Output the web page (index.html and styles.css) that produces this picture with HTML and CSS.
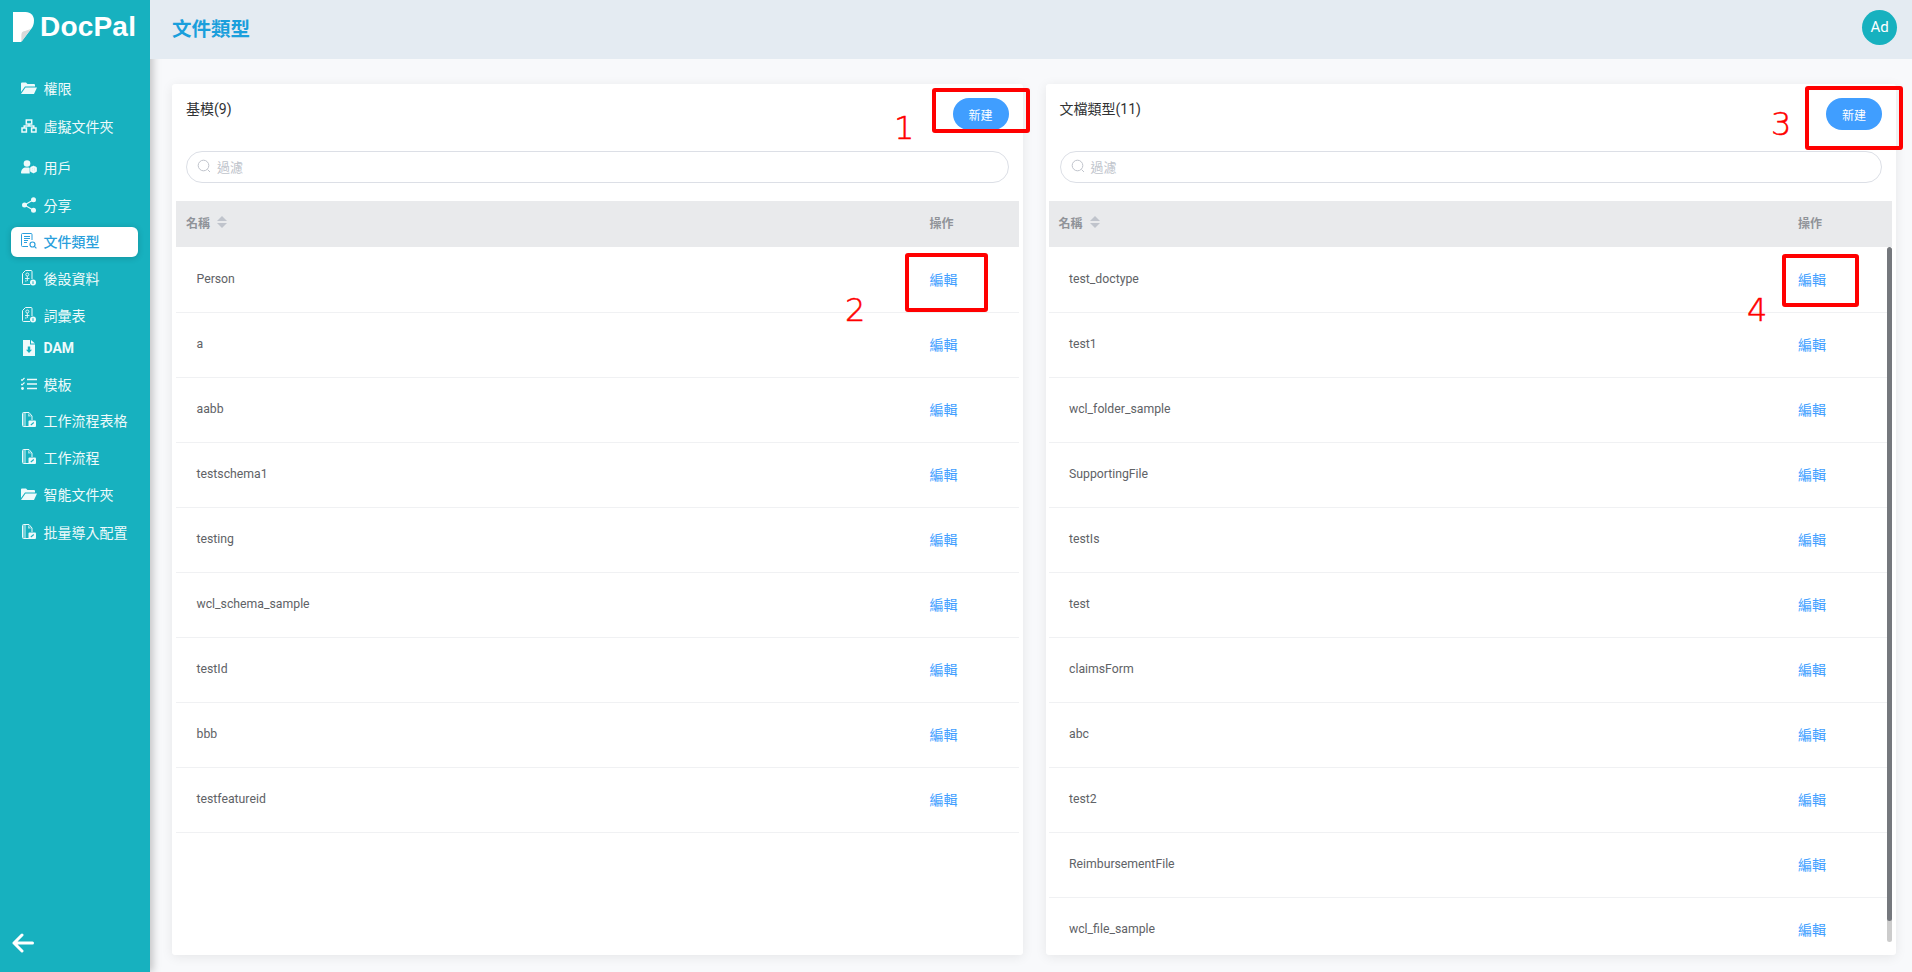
FILE: index.html
```html
<!DOCTYPE html>
<html lang="zh-Hant">
<head>
  <meta charset="UTF-8" />
  <meta name="viewport" content="width=device-width, initial-scale=1.0"/>
  <title>文件類型</title>
  <link rel="stylesheet" href="styles.css">
</head>
<body>
  <svg class="icon-defs" xmlns="http://www.w3.org/2000/svg">
    <symbol id="i-folder" viewBox="0 0 16 13">
      <path fill="currentColor" d="M0 2a1 1 0 0 1 1-1h4l1.500 1.500H13a1 1 0 0 1 1 1V5H4L0 10.500z"/>
      <path fill="currentColor" d="M4.500 6H16l-3 6.500H0z"/>
    </symbol>
    <symbol id="i-tree" viewBox="0 0 16 14">
      <g fill="none" stroke="currentColor" stroke-width="1.500">
        <rect x="5.300" y="1" width="5.400" height="4"/>
        <rect x="1" y="9" width="4.400" height="4"/>
        <rect x="10.600" y="9" width="4.400" height="4"/>
        <path d="M8 5v2H3.200v2M8 7h4.800v2"/>
      </g>
    </symbol>
    <symbol id="i-user" viewBox="0 0 16 14">
      <circle cx="6" cy="3.500" r="3.300" fill="currentColor"/>
      <path fill="currentColor" d="M0 13c0-3.500 2.200-5.500 5-5.500h2.500c.8 0 1.200.3 1.200.8V13.500H.5z"/>
      <circle cx="12.500" cy="9.500" r="2.400" fill="none" stroke="currentColor" stroke-width="2"/>
      <path stroke="currentColor" stroke-width="1.200" d="M12.500 5.800v7.400M9.300 7.700l6.400 3.600M9.300 11.300l6.400-3.600"/>
    </symbol>
    <symbol id="i-share" viewBox="0 0 14 16">
      <circle cx="11.500" cy="2.800" r="2.500" fill="currentColor"/>
      <circle cx="2.500" cy="8" r="2.500" fill="currentColor"/>
      <circle cx="11.500" cy="13.200" r="2.500" fill="currentColor"/>
      <path fill="none" stroke="currentColor" stroke-width="1.100" d="M11.500 2.800 2.500 8l9 5.200"/>
    </symbol>
    <symbol id="i-docsearch" viewBox="0 0 16 16">
      <path fill="none" stroke="currentColor" stroke-width="1" d="M7 13.500H1.500a1 1 0 0 1-1-1V1.500a1 1 0 0 1 1-1H10a1 1 0 0 1 1 1V7"/>
      <path stroke="currentColor" stroke-width="1" d="M3 3.500h6M3 5.500h6M3 7.500h4M3 9.500h3"/>
      <circle cx="11.500" cy="11.500" r="2.500" fill="none" stroke="currentColor" stroke-width="1.200"/>
      <path stroke="currentColor" stroke-width="1.200" d="m13.400 13.400 2 2"/>
    </symbol>
    <symbol id="i-meta" viewBox="0 0 14 16">
      <path fill="none" stroke="currentColor" stroke-width="1" d="M8 14.500H1.500a1 1 0 0 1-1-1V3.500L3.500.5H9a1 1 0 0 1 1 1V9"/>
      <circle cx="5.300" cy="4.500" r="1.500" fill="none" stroke="currentColor" stroke-width=".9"/>
      <path fill="none" stroke="currentColor" stroke-width=".9" d="M5.300 6v5M3 8.500h4.500M3 11h1.500"/>
      <circle cx="11" cy="12.500" r="3" fill="currentColor"/>
      <path stroke="#17b1bf" stroke-width="1" d="M11 11.200v2.800"/>
    </symbol>
    <symbol id="i-dam" viewBox="0 0 12 16">
      <path fill="currentColor" d="M0 0h7v4.500h5V16H0zM8 0l4 3.500H8z"/>
      <path fill="#17b1bf" d="M4.800 6.500h2.400v3.200H9L6 13 3 9.700h1.800z"/>
    </symbol>
    <symbol id="i-list" viewBox="0 0 16 13">
      <path stroke="currentColor" stroke-width="1.700" d="M6 2h10M6 6.500h10M6 11h10"/>
      <path fill="none" stroke="currentColor" stroke-width="1.100" d="m0 2 1 1 2.500-2.500M0 6.500l1 1 2.500-2.500"/>
      <circle cx="1.500" cy="11" r="1.400" fill="currentColor"/>
    </symbol>
    <symbol id="i-flow" viewBox="0 0 14 16">
      <path fill="none" stroke="currentColor" stroke-width="1" d="M7 14.500H1.500a1 1 0 0 1-1-1V1.500a1 1 0 0 1 1-1H7L10 4v4"/>
      <path fill="currentColor" opacity=".45" d="M1 1h3v13H1z"/>
      <path fill="currentColor" opacity=".6" d="M6 1l3.500 3.500H6z"/>
      <rect x="6.500" y="8.500" width="7.500" height="6.500" rx="1" fill="currentColor"/>
      <path stroke="#17b1bf" stroke-width="1.100" d="m8.800 13 3-2.500"/>
    </symbol>
    <symbol id="i-back" viewBox="0 0 22 20">
      <path fill="none" stroke="currentColor" stroke-width="3" stroke-linecap="round" stroke-linejoin="round" d="M20.500 10H2M10 2 2 10l8 8"/>
    </symbol>
    <symbol id="i-search" viewBox="0 0 14 14">
      <circle cx="6.500" cy="6.500" r="5.300" fill="none" stroke="currentColor" stroke-width="1"/>
      <path stroke="currentColor" stroke-width="1" d="m10.500 10.500 2.500 2.500"/>
    </symbol>
  </svg>

  <div class="layout">
    <aside class="sidebar">
      <div class="logo">
        <svg class="logo-mark" viewBox="0 0 21 30" xmlns="http://www.w3.org/2000/svg">
          <path fill="#fff" d="M0 0h12.500C18 0 21 4 21 8.500c0 3.500-1 6-2.500 8L8 30H0z"/>
          <path fill="#d9d9d9" d="M8.500 30c0-4-.5-8 .5-9.500 1.500-2 7-1.500 10-5z"/>
        </svg>
        <span class="logo-text">DocPal</span>
      </div>
      <nav class="nav">
        <a class="nav-item"><svg class="nav-icon"><use href="#i-folder"/></svg>權限</a>
        <a class="nav-item gap-l"><svg class="nav-icon"><use href="#i-tree"/></svg>虛擬文件夾</a>
        <a class="nav-item gap-xl"><svg class="nav-icon"><use href="#i-user"/></svg>用戶</a>
        <a class="nav-item gap-l"><svg class="nav-icon"><use href="#i-share"/></svg>分享</a>
        <a class="nav-item gap-m active"><svg class="nav-icon"><use href="#i-docsearch"/></svg>文件類型</a>
        <a class="nav-item"><svg class="nav-icon"><use href="#i-meta"/></svg>後設資料</a>
        <a class="nav-item"><svg class="nav-icon"><use href="#i-meta"/></svg>詞彙表</a>
        <a class="nav-item gap-s strong"><svg class="nav-icon"><use href="#i-dam"/></svg>DAM</a>
        <a class="nav-item gap-m"><svg class="nav-icon"><use href="#i-list"/></svg>模板</a>
        <a class="nav-item gap-m"><svg class="nav-icon"><use href="#i-flow"/></svg>工作流程表格</a>
        <a class="nav-item"><svg class="nav-icon"><use href="#i-flow"/></svg>工作流程</a>
        <a class="nav-item"><svg class="nav-icon"><use href="#i-folder"/></svg>智能文件夾</a>
        <a class="nav-item gap-l"><svg class="nav-icon"><use href="#i-flow"/></svg>批量導入配置</a>
      </nav>
      <div class="collapse"><svg class="collapse-icon"><use href="#i-back"/></svg></div>
    </aside>

    <div class="content">
      <header class="topbar">
        <h1 class="page-title">文件類型</h1>
        <div class="avatar">Ad</div>
      </header>

      <main class="panels">
        <section class="card">
          <div class="card-head">
            <div class="card-title">基模(9)</div>
            <button class="btn-new" type="button">新建</button>
          </div>
          <div class="filter">
            <svg class="filter-icon"><use href="#i-search"/></svg>
            <span class="filter-text">過濾</span>
          </div>
          <div class="table">
            <div class="table-head">
              <div class="th-name">名稱
                <span class="sort"><i class="sort-up"></i><i class="sort-down"></i></span>
              </div>
              <div class="col-action">操作</div>
            </div>
            <div class="table-body">
              <div class="row"><div class="cell-name">Person</div><div class="col-action"><a class="edit">編輯</a></div></div>
              <div class="row"><div class="cell-name">a</div><div class="col-action"><a class="edit">編輯</a></div></div>
              <div class="row"><div class="cell-name">aabb</div><div class="col-action"><a class="edit">編輯</a></div></div>
              <div class="row"><div class="cell-name">testschema1</div><div class="col-action"><a class="edit">編輯</a></div></div>
              <div class="row"><div class="cell-name">testing</div><div class="col-action"><a class="edit">編輯</a></div></div>
              <div class="row"><div class="cell-name">wcl_schema_sample</div><div class="col-action"><a class="edit">編輯</a></div></div>
              <div class="row"><div class="cell-name">testId</div><div class="col-action"><a class="edit">編輯</a></div></div>
              <div class="row"><div class="cell-name">bbb</div><div class="col-action"><a class="edit">編輯</a></div></div>
              <div class="row"><div class="cell-name">testfeatureid</div><div class="col-action"><a class="edit">編輯</a></div></div>
            </div>
          </div>
        </section>

        <section class="card">
          <div class="card-head">
            <div class="card-title">文檔類型(11)</div>
            <button class="btn-new" type="button">新建</button>
          </div>
          <div class="filter">
            <svg class="filter-icon"><use href="#i-search"/></svg>
            <span class="filter-text">過濾</span>
          </div>
          <div class="table table-scroll">
            <div class="table-head">
              <div class="th-name">名稱
                <span class="sort"><i class="sort-up"></i><i class="sort-down"></i></span>
              </div>
              <div class="col-action">操作</div>
            </div>
            <div class="table-body">
              <div class="row"><div class="cell-name">test_doctype</div><div class="col-action"><a class="edit">編輯</a></div></div>
              <div class="row"><div class="cell-name">test1</div><div class="col-action"><a class="edit">編輯</a></div></div>
              <div class="row"><div class="cell-name">wcl_folder_sample</div><div class="col-action"><a class="edit">編輯</a></div></div>
              <div class="row"><div class="cell-name">SupportingFile</div><div class="col-action"><a class="edit">編輯</a></div></div>
              <div class="row"><div class="cell-name">testIs</div><div class="col-action"><a class="edit">編輯</a></div></div>
              <div class="row"><div class="cell-name">test</div><div class="col-action"><a class="edit">編輯</a></div></div>
              <div class="row"><div class="cell-name">claimsForm</div><div class="col-action"><a class="edit">編輯</a></div></div>
              <div class="row"><div class="cell-name">abc</div><div class="col-action"><a class="edit">編輯</a></div></div>
              <div class="row"><div class="cell-name">test2</div><div class="col-action"><a class="edit">編輯</a></div></div>
              <div class="row"><div class="cell-name">ReimbursementFile</div><div class="col-action"><a class="edit">編輯</a></div></div>
              <div class="row"><div class="cell-name">wcl_file_sample</div><div class="col-action"><a class="edit">編輯</a></div></div>
            </div>
            <div class="scroll-track"><div class="scroll-thumb"></div></div>
          </div>
        </section>
      </main>
    </div>
  </div>

  <!-- red markup drawn over the screenshot -->
  <div class="mark box-1"></div>
  <div class="mark box-2"></div>
  <div class="mark box-3"></div>
  <div class="mark box-4"></div>
  <div class="mark-num num-1">1</div>
  <div class="mark-num num-2">2</div>
  <div class="mark-num num-3">3</div>
  <div class="mark-num num-4">4</div>
</body>
</html>
```

FILE: styles.css
```css
/* Base */
html, body {
  height: 100%;
}

body {
  margin: 0;
  overflow: hidden;
  font-family: Roboto, "Noto Sans CJK TC", sans-serif;
  font-size: 12px;
  color: #606266;
  background-color: #f8f9fb;
}

.icon-defs {
  display: none;
}

.layout {
  display: flex;
  height: 100%;
}

/* Sidebar */
.sidebar {
  width: 150px;
  flex-shrink: 0;
  display: flex;
  flex-direction: column;
  background-color: #17b1bf;
  color: #fff;
  box-shadow: 3px 0 8px rgba(0, 0, 0, 0.22);
}

.logo {
  height: 59px;
  box-sizing: border-box;
  padding: 12px 0 0 13px;
  display: flex;
  gap: 6px;
}

.logo-mark {
  width: 21px;
  height: 30px;
}

.logo-text {
  font-family: "Liberation Sans", sans-serif;
  font-weight: 700;
  font-size: 28px;
  line-height: 29px;
  letter-spacing: 0.2px;
  color: #fff;
}

.nav {
  display: flex;
  flex-direction: column;
  padding: 15px 12px 0 11px;
}

.nav-item {
  height: 30px;
  box-sizing: border-box;
  margin-top: 7px;
  padding: 0 0 2px 10px;
  display: flex;
  align-items: center;
  gap: 6.5px;
  font-size: 14px;
  color: #eefafb;
  border-radius: 6px;
}

.nav-item:first-child {
  margin-top: 0;
}

.gap-s {
  margin-top: 3px;
}

.gap-m {
  margin-top: 6px;
}

.gap-l {
  margin-top: 8px;
}

.gap-xl {
  margin-top: 11px;
}

.nav-item.strong {
  font-weight: 700;
}

.nav-item.active {
  background-color: #fff;
  color: #2a9fdc;
  font-weight: 500;
  box-shadow: 0 1px 6px rgba(0, 0, 0, 0.18);
}

.nav-icon {
  width: 16px;
  height: 16px;
  flex-shrink: 0;
}

.collapse {
  margin-top: auto;
  padding: 0 0 19px 12px;
}

.collapse-icon {
  display: block;
  width: 22px;
  height: 20px;
}

/* Top bar */
.content {
  flex: 1;
  min-width: 0;
  min-height: 0;
  display: flex;
  flex-direction: column;
}

.topbar {
  position: relative;
  height: 59px;
  flex-shrink: 0;
  box-sizing: border-box;
  padding: 0 15px 5px 22px;
  display: flex;
  align-items: center;
  justify-content: space-between;
  background-color: #e4ebf2;
}

.page-title {
  margin: 0;
  font-size: 19.5px;
  font-weight: 700;
  color: #1a9fdc;
}

.avatar {
  width: 35px;
  height: 35px;
  border-radius: 50%;
  background-color: #17b1bf;
  color: #fff;
  font-size: 15px;
  display: flex;
  align-items: center;
  justify-content: center;
}

/* Cards */
.panels {
  flex: 1;
  min-height: 0;
  display: grid;
  grid-template-columns: 1fr 1fr;
  grid-template-rows: minmax(0, 1fr);
  gap: 23px;
  padding: 25px 16px 17px 22px;
}

.card {
  min-width: 0;
  min-height: 0;
  display: flex;
  flex-direction: column;
  background-color: #fff;
  border-radius: 3px;
  box-shadow: 0 2px 12px rgba(0, 0, 0, 0.08);
}

.card-head {
  display: flex;
  justify-content: space-between;
  padding: 14px 14px 0;
}

.card-title {
  padding-top: 1px;
  font-size: 14px;
  line-height: 20px;
  color: #303133;
}

.btn-new {
  width: 56px;
  height: 32px;
  padding: 0;
  border: none;
  border-radius: 16px;
  background-color: #409eff;
  color: #fff;
  font-family: inherit;
  font-size: 12px;
}

/* Filter input */
.filter {
  height: 32px;
  box-sizing: border-box;
  margin: 21px 14px 18px;
  padding: 0 0 2px 10px;
  display: flex;
  align-items: center;
  gap: 6px;
  border: 1px solid #dcdfe6;
  border-radius: 16px;
  color: #c0c4cc;
  font-size: 13px;
}

.filter-icon {
  width: 14px;
  height: 14px;
}

/* Table */
.table {
  position: relative;
  flex: 1;
  min-height: 0;
  margin: 0 4px 8px;
  display: flex;
  flex-direction: column;
}

.table-scroll {
  margin-left: 3px;
}

.table-head {
  height: 46px;
  box-sizing: border-box;
  padding-bottom: 4px;
  flex-shrink: 0;
  display: flex;
  align-items: center;
  background-color: #e9eaec;
  color: #909399;
  font-weight: 700;
}

.th-name {
  flex: 1;
  padding-left: 10px;
  display: flex;
  align-items: center;
  gap: 7px;
}

.sort {
  display: inline-flex;
  flex-direction: column;
  gap: 2px;
}

.sort-up, .sort-down {
  width: 0;
  height: 0;
  border-left: 5px solid transparent;
  border-right: 5px solid transparent;
}

.sort-up {
  border-bottom: 5px solid #c0c4cc;
}

.sort-down {
  border-top: 5px solid #c0c4cc;
}

.col-action {
  width: 99px;
  box-sizing: border-box;
  padding-left: 10px;
}

.table-scroll .col-action {
  width: 104px;
}

.table-body {
  flex: 1;
  min-height: 0;
  padding-top: 1px;
  overflow: hidden;
}

.row {
  height: 65px;
  box-sizing: border-box;
  display: flex;
  align-items: center;
  border-bottom: 1px solid #f0f1f3;
}

.cell-name {
  flex: 1;
  padding: 0 0 3px 20.5px;
  font-size: 12.25px;
}

.row .col-action {
  padding-bottom: 2px;
}

.edit {
  font-size: 14px;
  color: #409eff;
}

/* Scrollbar of the right table */
.scroll-track {
  position: absolute;
  top: 46px;
  right: 0;
  width: 5px;
  height: 695px;
  border-radius: 3px;
  background-color: #ccc;
  overflow: hidden;
}

.scroll-thumb {
  height: 674px;
  border-radius: 3px;
  background-color: #75787d;
}

/* Red markup */
.mark {
  position: absolute;
  box-sizing: border-box;
  border: 4px solid #f00;
  border-radius: 3px;
}

.box-1 {
  left: 932px;
  top: 88px;
  width: 98px;
  height: 45px;
}

.box-2 {
  left: 905px;
  top: 253px;
  width: 83px;
  height: 59px;
}

.box-3 {
  left: 1805px;
  top: 86px;
  width: 98px;
  height: 64px;
}

.box-4 {
  left: 1782px;
  top: 254px;
  width: 77px;
  height: 53px;
}

.mark-num {
  position: absolute;
  font-family: "DejaVu Sans", sans-serif;
  font-size: 32px;
  line-height: 36px;
  font-weight: 200;
  -webkit-text-stroke: 0.5px #f00;
  color: #f00;
}

.num-1 {
  left: 894px;
  top: 110px;
}

.num-2 {
  left: 845px;
  top: 292px;
}

.num-3 {
  left: 1771px;
  top: 106px;
}

.num-4 {
  left: 1747px;
  top: 292px;
}
```
